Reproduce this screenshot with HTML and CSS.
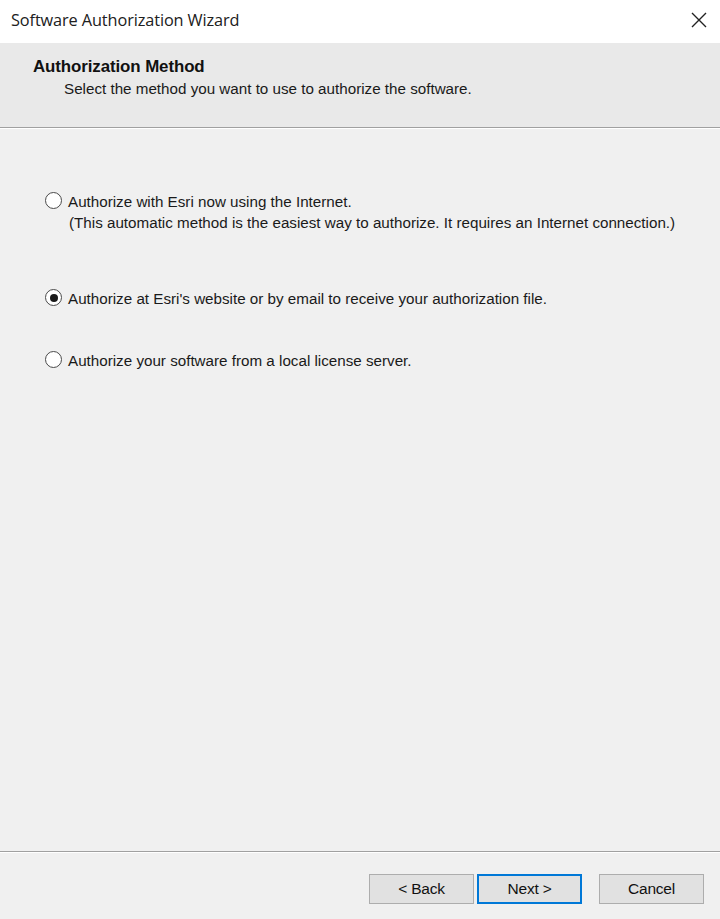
FILE: index.html
```html
<!DOCTYPE html>
<html>
<head>
<meta charset="utf-8">
<link rel="stylesheet" href="styles.css">
</head>
<body>
<div class="window">
  <div class="titlebar">
    <span class="title">Software Authorization Wizard</span>
    <span class="close">
      <svg width="16" height="16" viewBox="0 0 16 16"><path d="M1 1 L15 15 M15 1 L1 15" stroke="#222" stroke-width="1.4" fill="none"/></svg>
    </span>
  </div>
  <div class="header">
    <div class="h-title">Authorization Method</div>
    <div class="h-sub">Select the method you want to use to authorize the software.</div>
  </div>
  <div class="sep"></div>
  <div class="content">
    <div class="option opt1">
      <span class="radio"></span>
      <div class="label">
        <div>Authorize with Esri now using the Internet.</div>
        <div class="sub">(This automatic method is the easiest way to authorize. It requires an Internet connection.)</div>
      </div>
    </div>
    <div class="option opt2">
      <span class="radio checked"></span>
      <div class="label"><div>Authorize at Esri's website or by email to receive your authorization file.</div></div>
    </div>
    <div class="option opt3">
      <span class="radio"></span>
      <div class="label"><div>Authorize your software from a local license server.</div></div>
    </div>
  </div>
  <div class="sep"></div>
  <div class="footer">
    <button class="btn">&lt; Back</button>
    <button class="btn default">Next &gt;</button>
    <button class="btn cancel">Cancel</button>
  </div>
</div>
</body>
</html>
```
FILE: styles.css
```css
html, body {
  margin: 0;
  padding: 0;
}
body {
  width: 720px;
  height: 919px;
  background: #f0f0f0;
  font-family: "Liberation Sans", Arial, sans-serif;
  color: #1a1a1a;
  overflow: hidden;
}
.window {
  display: flex;
  flex-direction: column;
  height: 919px;
}
.titlebar {
  height: 43px;
  background: #ffffff;
  display: flex;
  align-items: center;
  justify-content: space-between;
  padding: 0 13px 0 11px;
  flex: none;
}
.title {
  font-family: "Open Sans", "Noto Sans", sans-serif;
  font-size: 16.3px;
  color: #202020;
  letter-spacing: -0.1px;
  margin-top: -4px;
}
.close {
  display: flex;
  width: 16px;
  height: 16px;
  margin-top: -4px;
}
.header {
  height: 84px;
  background: #e9e9e9;
  box-sizing: border-box;
  padding: 14px 0 0 33px;
  flex: none;
}
.h-title {
  font-weight: bold;
  font-size: 16.9px;
  color: #111;
  letter-spacing: -0.1px;
}
.h-sub {
  font-size: 15.2px;
  margin: 3px 0 0 31px;
}
.sep {
  height: 1px;
  background: #a0a0a0;
  border-bottom: 1px solid #ffffff;
  flex: none;
}
.content {
  flex: 1;
  padding: 61px 0 0 45px;
  font-size: 15.2px;
}
.option {
  display: flex;
  align-items: flex-start;
  gap: 6px;
}
.opt2 { margin-top: 54px; }
.opt3 { margin-top: 40px; }
.label {
  line-height: 21px;
  padding-top: 1px;
}
.label .sub {
  margin-left: 1px;
}
.radio {
  width: 15px;
  height: 15px;
  border: 1.7px solid #4a4a4a;
  border-radius: 50%;
  background: #fff;
  margin-top: 2px;
  flex: none;
  display: flex;
  align-items: center;
  justify-content: center;
}
.radio.checked::after {
  content: "";
  width: 8px;
  height: 8px;
  border-radius: 50%;
  background: #1a1a1a;
}
.footer {
  height: 66px;
  flex: none;
  display: flex;
  align-items: flex-start;
  padding: 21px 0 0 369px;
  box-sizing: border-box;
}
.btn {
  width: 105px;
  height: 30px;
  background: #e1e1e1;
  border: 1px solid #adadad;
  font-family: "Liberation Sans", Arial, sans-serif;
  font-size: 15.5px;
  color: #111;
  padding: 0;
  letter-spacing: -0.2px;
  margin-right: 3px;
}
.btn.default {
  border: 2px solid #0078d7;
}
.btn.cancel {
  margin-left: 14px;
}
```
